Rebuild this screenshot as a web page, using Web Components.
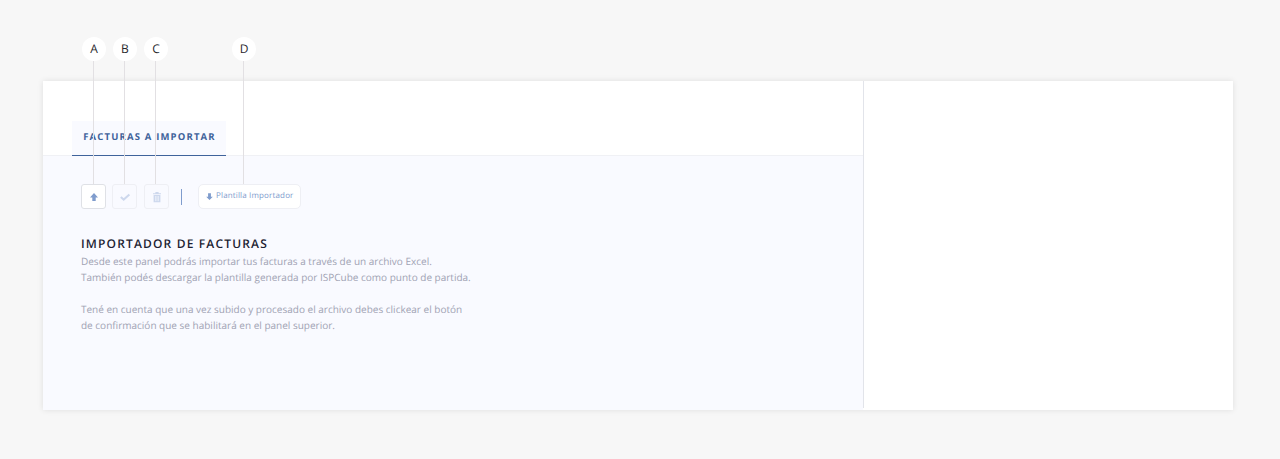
<!DOCTYPE html>
<html lang="es">
<head>
<meta charset="utf-8">
<title>Importador de facturas</title>
<style>
    html, body { margin: 0; height: 100%; }
    body {
        background: #f7f7f7;
        font-family: "Open Sans", "Liberation Sans", sans-serif;
        text-rendering: geometricPrecision;
        overflow: hidden;
    }
    import-screen .sep { display: block; width: 1px; height: 16px; margin: 0 10px 0 6px; background: #7f9ccd; }
</style>
</head>
<body>
<import-screen>
    <tool-button slot="tools" kind="upload" active></tool-button>
    <tool-button slot="tools" kind="check"></tool-button>
    <tool-button slot="tools" kind="trash"></tool-button>
    <span slot="tools" class="sep"></span>
    <tool-button slot="tools" kind="download">Plantilla Importador</tool-button>
    <info-text slot="content" heading="Importador de facturas">
        <p>Desde este panel podrás importar tus facturas a través de un archivo Excel.<br>También podés descargar la plantilla generada por ISPCube como punto de partida.</p>
        <p>Tené en cuenta que una vez subido y procesado el archivo debes clickear el botón<br>de confirmación que se habilitará en el panel superior.</p>
    </info-text>
    <call-out slot="marks" letter="A" x="94"></call-out>
    <call-out slot="marks" letter="B" x="125"></call-out>
    <call-out slot="marks" letter="C" x="156"></call-out>
    <call-out slot="marks" letter="D" x="244"></call-out>
</import-screen>

<script>
(function() {
    "use strict";

    const icons = {
        upload: '<path d="M6 2 L10 6.4 H7.7 V10 H4.3 V6.4 H2 Z" fill="currentColor"/>',
        download: '<path d="M6 10.8 L10.4 6.2 H7.9 V1.6 H4.1 V6.2 H1.6 Z" fill="currentColor"/>',
        check: '<path d="M1.8 6 L4.7 8.6 L10.4 3.4" fill="none" stroke="currentColor" stroke-width="2"/>',
        trash: '<path d="M2 2.2 H4.4 V1 H7.6 V2.2 H10 V3.3 H2 Z M2.6 4 H9.4 V11.2 H2.6 Z" fill="currentColor"/><path d="M4.6 5 V10.2 M6 5 V10.2 M7.4 5 V10.2" stroke="#f9faff" stroke-width=".6"/>'
    };

    class ToolButton extends HTMLElement {
        constructor() {
            super();
            const kind = this.getAttribute('kind');
            this.attachShadow({mode: 'open'}).innerHTML = `
                <style>
                    :host {
                        display: inline-flex;
                        align-items: center;
                        justify-content: center;
                        box-sizing: border-box;
                        height: 25px;
                        width: 25px;
                        border: 1px solid #eeeff4;
                        border-radius: 3px;
                        color: #cdd8ed;
                        background: #f9faff;
                    }
                    :host([active]) {
                        background: #fff;
                        border-color: #dfe1e6;
                        color: #7f9ccd;
                    }
                    :host([kind="trash"]) { margin-left: 1px; }
                    :host([kind="download"]) {
                        background: #fff;
                        border-radius: 5px;
                        color: #7f9ccd;
                        justify-content: flex-start;
                        padding: 0 6px;
                        gap: 2px;
                        width: 103px;
                    }
                    svg { width: 12px; height: 12px; flex: none; }
                    :host([kind="download"]) svg { width: 9px; height: 9px; }
                    span {
                        font-size: 8px;
                        line-height: 12px;
                        letter-spacing: .15px;
                        margin-top: -1px;
                        color: #7f9ccd;
                        white-space: nowrap;
                    }
                </style>
                <svg viewBox="0 0 12 12">${icons[kind]}</svg><span><slot></slot></span>`;
        }
    }

    class InfoText extends HTMLElement {
        constructor() {
            super();
            this.attachShadow({mode: 'open'}).innerHTML = `
                <style>
                    :host { display: block; }
                    h2 {
                        margin: 0 0 1px;
                        font-size: 12px;
                        line-height: 16px;
                        font-weight: 600;
                        letter-spacing: 1.16px;
                        text-transform: uppercase;
                        color: #1d1f33;
                    }
                    ::slotted(p) {
                        margin: 0 0 16px;
                        font-size: 10px;
                        line-height: 16px;
                        color: #a0a2b3;
                    }
                </style>
                <h2>${this.getAttribute('heading')}</h2>
                <slot></slot>`;
        }
    }

    // lettered marker that hangs over the screen, x is the centre of the dot
    class CallOut extends HTMLElement {
        constructor() {
            super();
            this.attachShadow({mode: 'open'}).innerHTML = `
                <style>
                    :host {
                        position: absolute;
                        top: 37px;
                        width: 24px;
                        margin-left: -12px;
                        left: ${this.getAttribute('x')}px;
                        z-index: 2;
                    }
                    .dot {
                        width: 24px;
                        height: 24px;
                        border-radius: 50%;
                        background: #fff;
                        color: #26262b;
                        font-size: 12px;
                        line-height: 24px;
                        text-align: center;
                    }
                    .stem {
                        width: 1px;
                        height: 123px;
                        margin-left: 11px;
                        background: #e2e0e3;
                    }
                </style>
                <div class="dot">${this.getAttribute('letter')}</div>
                <div class="stem"></div>`;
        }
    }

    class ImportScreen extends HTMLElement {
        constructor() {
            super();
            this.attachShadow({mode: 'open'}).innerHTML = `
                <style>
                    :host {
                        display: block;
                        box-sizing: border-box;
                        height: 459px;
                        padding: 81px 47px 49px 43px;
                    }
                    .card {
                        display: flex;
                        height: 329px;
                        background: #fff;
                        box-shadow: 0 0 6px rgba(0, 0, 0, .1);
                    }
                    .main {
                        width: 820px;
                        display: flex;
                        flex-direction: column;
                        margin-bottom: 2px;
                        border-right: 1px solid #e2e4ea;
                    }
                    .tabs {
                        height: 75px;
                        box-sizing: border-box;
                        padding: 40px 0 0 29px;
                        border-bottom: 1px solid #f0f1f5;
                        display: flex;
                    }
                    .tab {
                        width: 154px;
                        height: 35px;
                        box-sizing: border-box;
                        background: #f9faff;
                        border-bottom: 1px solid #3f639b;
                        color: #3f639b;
                        font-size: 9.5px;
                        font-weight: 700;
                        letter-spacing: 1.17px;
                        line-height: 32px;
                        padding-left: 1px;
                        text-align: center;
                        text-transform: uppercase;
                    }
                    .body {
                        flex: 1;
                        background: #f9faff;
                        padding: 28px 38px 0;
                        margin-bottom: -2px;
                    }
                    .tools {
                        display: flex;
                        align-items: center;
                        gap: 6px;
                        height: 25px;
                        margin-bottom: 27px;
                    }
                </style>
                <slot name="marks"></slot>
                <div class="card">
                    <div class="main">
                        <div class="tabs"><div class="tab">Facturas a importar</div></div>
                        <div class="body">
                            <div class="tools"><slot name="tools"></slot></div>
                            <slot name="content"></slot>
                        </div>
                    </div>
                </div>`;
        }
    }

    window.customElements.define('tool-button', ToolButton);
    window.customElements.define('info-text', InfoText);
    window.customElements.define('call-out', CallOut);
    window.customElements.define('import-screen', ImportScreen);
})();
</script>
</body>
</html>
